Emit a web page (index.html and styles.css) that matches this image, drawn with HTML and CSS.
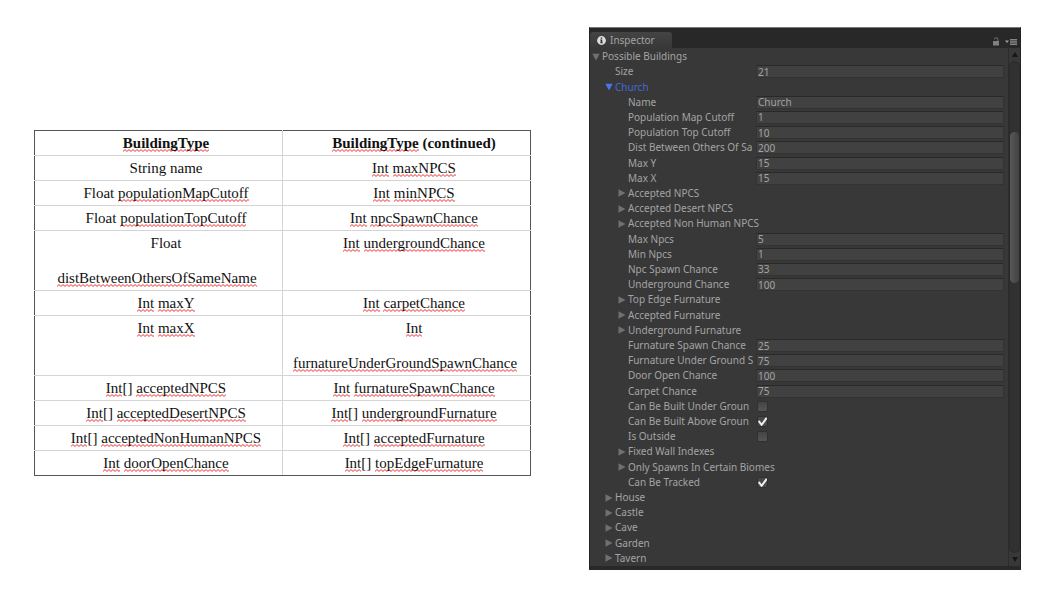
FILE: index.html
```html
<!DOCTYPE html>
<html lang="en">
<head>
<meta charset="utf-8">
<title>BuildingType</title>
<link rel="stylesheet" href="styles.css">
</head>
<body>
<svg width="0" height="0" class="defs" aria-hidden="true">
  <symbol id="right" viewBox="0 0 8 8"><path d="M0.5 0.3 7.5 4 0.5 7.7z"/></symbol>
  <symbol id="down" viewBox="0 0 8 8"><path d="M0.3 0.8h7.4L4 7.6z"/></symbol>
</svg>
<main class="page">
  <table class="types">
    <thead>
      <tr><th><u>BuildingType</u></th><th><u>BuildingType</u> (continued)</th></tr>
    </thead>
    <tbody>
      <tr><td>String name</td><td><u>Int</u> <u>maxNPCS</u></td></tr>
      <tr><td>Float <u>populationMapCutoff</u></td><td><u>Int</u> <u>minNPCS</u></td></tr>
      <tr><td>Float <u>populationTopCutoff</u></td><td><u>Int</u> <u>npcSpawnChance</u></td></tr>
      <tr><td>Float <div class="wrapped"><u>distBetweenOthersOfSameName</u></div></td><td><u>Int</u> <u>undergroundChance</u></td></tr>
      <tr><td><u>Int</u> <u>maxY</u></td><td><u>Int</u> <u>carpetChance</u></td></tr>
      <tr><td><u>Int</u> <u>maxX</u></td><td><u>Int</u> <div class="wrapped"><u>furnatureUnderGroundSpawnChance</u></div></td></tr>
      <tr><td><u>Int</u>[] <u>acceptedNPCS</u></td><td><u>Int</u> <u>furnatureSpawnChance</u></td></tr>
      <tr><td><u>Int</u>[] <u>acceptedDesertNPCS</u></td><td><u>Int</u>[] <u>undergroundFurnature</u></td></tr>
      <tr><td><u>Int</u>[] <u>acceptedNonHumanNPCS</u></td><td><u>Int</u>[] <u>acceptedFurnature</u></td></tr>
      <tr><td><u>Int</u> <u>doorOpenChance</u></td><td><u>Int</u>[] <u>topEdgeFurnature</u></td></tr>
    </tbody>
  </table>

  <section class="inspector">
    <header class="bar">
      <button class="tab"><svg width="9" height="9" viewBox="0 0 9 9" aria-hidden="true"><circle cx="4.5" cy="4.5" r="4.4" fill="#dedede"/><path d="M3.7 1.5h1.6v1.3H3.7zM3.2 3.6h2.1v2.8h.6v.9H3.1v-.9h.6V4.5h-.5z" fill="#303030"/></svg>Inspector</button>
      <div class="tools">
        <button class="tool" aria-label="Lock"><svg width="8" height="9" viewBox="0 0 8 9"><path d="M2.5 2.4a1.7 1.7 0 0 1 3.4 0V4" fill="none" stroke="#777"/><path d="M1 4h6v4.5H1z" fill="#808080"/></svg></button>
        <button class="tool" aria-label="Options"><svg width="12" height="9" viewBox="0 0 12 9"><path d="M0 3.5h4L2 6z" fill="#a0a0a0"/><path d="M5 2h7v1.4H5zM5 4.3h7v1.4H5zM5 6.6h7V8H5z" fill="#858585"/></svg></button>
      </div>
    </header>
    <div class="content">
      <form class="rows">
        <div class="row"><button type="button" class="fold l0"><svg><use href="#down"/></svg>Possible Buildings</button></div>
        <div class="row"><label class="l1" for="size">Size</label><input id="size" type="text" value="21"></div>
        <div class="row"><button type="button" class="fold l1 active"><svg><use href="#down"/></svg>Church</button></div>
        <div class="row"><label class="l2" for="name">Name</label><input id="name" type="text" value="Church"></div>
        <div class="row"><label class="l2" for="pmc">Population Map Cutoff</label><input id="pmc" type="text" value="1"></div>
        <div class="row"><label class="l2" for="ptc">Population Top Cutoff</label><input id="ptc" type="text" value="10"></div>
        <div class="row"><label class="l2" for="dist">Dist Between Others Of Sa</label><input id="dist" type="text" value="200"></div>
        <div class="row"><label class="l2" for="maxy">Max Y</label><input id="maxy" type="text" value="15"></div>
        <div class="row"><label class="l2" for="maxx">Max X</label><input id="maxx" type="text" value="15"></div>
        <div class="row"><button type="button" class="fold l2"><svg><use href="#right"/></svg>Accepted NPCS</button></div>
        <div class="row"><button type="button" class="fold l2"><svg><use href="#right"/></svg>Accepted Desert NPCS</button></div>
        <div class="row"><button type="button" class="fold l2"><svg><use href="#right"/></svg>Accepted Non Human NPCS</button></div>
        <div class="row"><label class="l2" for="maxn">Max Npcs</label><input id="maxn" type="text" value="5"></div>
        <div class="row"><label class="l2" for="minn">Min Npcs</label><input id="minn" type="text" value="1"></div>
        <div class="row"><label class="l2" for="npc">Npc Spawn Chance</label><input id="npc" type="text" value="33"></div>
        <div class="row"><label class="l2" for="under">Underground Chance</label><input id="under" type="text" value="100"></div>
        <div class="row"><button type="button" class="fold l2"><svg><use href="#right"/></svg>Top Edge Furnature</button></div>
        <div class="row"><button type="button" class="fold l2"><svg><use href="#right"/></svg>Accepted Furnature</button></div>
        <div class="row"><button type="button" class="fold l2"><svg><use href="#right"/></svg>Underground Furnature</button></div>
        <div class="row"><label class="l2" for="fsc">Furnature Spawn Chance</label><input id="fsc" type="text" value="25"></div>
        <div class="row"><label class="l2" for="fug">Furnature Under Ground S</label><input id="fug" type="text" value="75"></div>
        <div class="row"><label class="l2" for="door">Door Open Chance</label><input id="door" type="text" value="100"></div>
        <div class="row"><label class="l2" for="carpet">Carpet Chance</label><input id="carpet" type="text" value="75"></div>
        <div class="row"><label class="l2" for="cbu">Can Be Built Under Groun</label><input id="cbu" type="checkbox"></div>
        <div class="row"><label class="l2" for="cba">Can Be Built Above Groun</label><input id="cba" type="checkbox" checked></div>
        <div class="row"><label class="l2" for="outside">Is Outside</label><input id="outside" type="checkbox"></div>
        <div class="row"><button type="button" class="fold l2"><svg><use href="#right"/></svg>Fixed Wall Indexes</button></div>
        <div class="row"><button type="button" class="fold l2"><svg><use href="#right"/></svg>Only Spawns In Certain Biomes</button></div>
        <div class="row"><label class="l2" for="tracked">Can Be Tracked</label><input id="tracked" type="checkbox" checked></div>
        <div class="row"><button type="button" class="fold l1"><svg><use href="#right"/></svg>House</button></div>
        <div class="row"><button type="button" class="fold l1"><svg><use href="#right"/></svg>Castle</button></div>
        <div class="row"><button type="button" class="fold l1"><svg><use href="#right"/></svg>Cave</button></div>
        <div class="row"><button type="button" class="fold l1"><svg><use href="#right"/></svg>Garden</button></div>
        <div class="row"><button type="button" class="fold l1"><svg><use href="#right"/></svg>Tavern</button></div>
      </form>
      <div class="scroll">
        <button class="arrow" aria-label="Scroll up"><svg width="6" height="5" viewBox="0 0 6 5"><path d="M3 0 6 5H0z"/></svg></button>
        <div class="track"><div class="thumb"></div></div>
        <button class="arrow" aria-label="Scroll down"><svg width="6" height="5" viewBox="0 0 6 5"><path d="M0 0h6L3 5z"/></svg></button>
      </div>
    </div>
  </section>
</main>
</body>
</html>
```
FILE: styles.css
```css
* { box-sizing: border-box; }

body { margin: 0; background: #fff; }

.defs { display: block; }

button {
  margin: 0;
  padding: 0;
  border: 0;
  background: none;
  color: inherit;
  font: inherit;
}

.page {
  display: grid;
  grid-template-columns: 497fr 432fr;
  gap: 58px;
  align-items: start;
  padding: 27px 37px 24px 34px;
}

/* Type table */
.types {
  width: 100%;
  margin-top: 103px;
  border-collapse: collapse;
  table-layout: fixed;
  border: 1px solid #555;
  color: #111;
  font: 15px/24px "Liberation Serif", serif;
  text-align: center;
  text-indent: 18px;
}

.types th,
.types td {
  padding: 0 3px 0 0;
  border: 1px solid #d4d4d4;
  vertical-align: top;
}

.types tr:first-child th { border-top-color: #555; }
.types tbody tr:last-child td { border-bottom-color: #555; }
.types tr > :first-child { border-left-color: #555; }
.types tr > :last-child { border-right-color: #555; }

.wrapped { margin-top: 11px; text-indent: 0; }

.types u {
  padding-bottom: 1px;
  text-decoration: none;
  background: url("data:image/svg+xml,%3Csvg xmlns='http://www.w3.org/2000/svg' width='4' height='3'%3E%3Cpath d='M-2 .5 0 2.5 2 .5 4 2.5 6 .5' fill='none' stroke='%23f02828'/%3E%3C/svg%3E") left bottom repeat-x;
}

/* Inspector */
.inspector {
  border: 1px solid #222;
  border-top-color: #777;
  border-bottom: 4px solid #282828;
  background: #383838;
  color: #a4a4a4;
  font: 10px/15px "Noto Sans", sans-serif;
}

.bar {
  display: flex;
  align-items: flex-end;
  justify-content: space-between;
  height: 20px;
  padding-right: 3px;
  background: #282828;
}

.tab {
  display: flex;
  align-items: center;
  gap: 4px;
  height: 16px;
  padding: 0 17px 0 7px;
  border-radius: 3px 3px 0 0;
  background: linear-gradient(#444, #383838);
}

.tools { display: flex; gap: 5px; }
.tool { display: flex; height: 11px; }

.content { display: grid; grid-template-columns: 1fr 12px; }

.rows {
  display: grid;
  grid-auto-rows: 1fr;
  min-height: 518px;
  padding: 1px 4px 0 0;
}

.row {
  display: grid;
  grid-template-columns: 166px 1fr;
  align-items: center;
  min-width: 0;
}

.row label {
  overflow: hidden;
  white-space: nowrap;
}

label.l1 { padding-left: 25px; }
label.l2 { padding-left: 38px; }

.fold {
  grid-column: 1 / -1;
  display: flex;
  align-items: center;
  gap: 2px;
}

.fold svg { width: 8px; height: 8px; fill: #707070; }
.fold.l0 { padding-left: 2px; }
.fold.l1 { padding-left: 15px; }
.fold.l2 { padding-left: 28px; }
.fold.active { color: #4268d8; }
.fold.active svg { fill: #4a74e8; }

.row input[type="text"] {
  width: 100%;
  height: 13px;
  padding: 0 1px;
  border: 1px solid #333;
  border-top-color: #292929;
  background: #414141;
  color: #a4a4a4;
  font: 10px/11px "Noto Sans", sans-serif;
}

.row input[type="checkbox"] {
  appearance: none;
  width: 11px;
  height: 11px;
  margin: 0 1px;
  border: 1px solid #303030;
  border-radius: 2px;
  background: linear-gradient(#444, #555);
}

.row input[type="checkbox"]:checked {
  background: #484848 url("data:image/svg+xml,%3Csvg xmlns='http://www.w3.org/2000/svg' viewBox='0 0 10 10'%3E%3Cpath d='M1.5 4.5 4.2 8 9 1.5' fill='none' stroke='%23eee' stroke-width='1.8'/%3E%3C/svg%3E") center / 11px border-box;
}

.scroll {
  display: flex;
  flex-direction: column;
  border-left: 1px solid #2c2c2c;
  background: #383838;
}

.arrow {
  display: flex;
  align-items: center;
  justify-content: center;
  height: 13px;
}

.arrow svg { fill: #161616; }

.track {
  flex: 1;
  padding-top: 70px;
  border: 1px solid #2b2b2b;
  border-radius: 6px;
  background: #313131;
}

.thumb {
  height: 151px;
  border-radius: 5px;
  background: linear-gradient(90deg, #585858, #424242);
}
```
